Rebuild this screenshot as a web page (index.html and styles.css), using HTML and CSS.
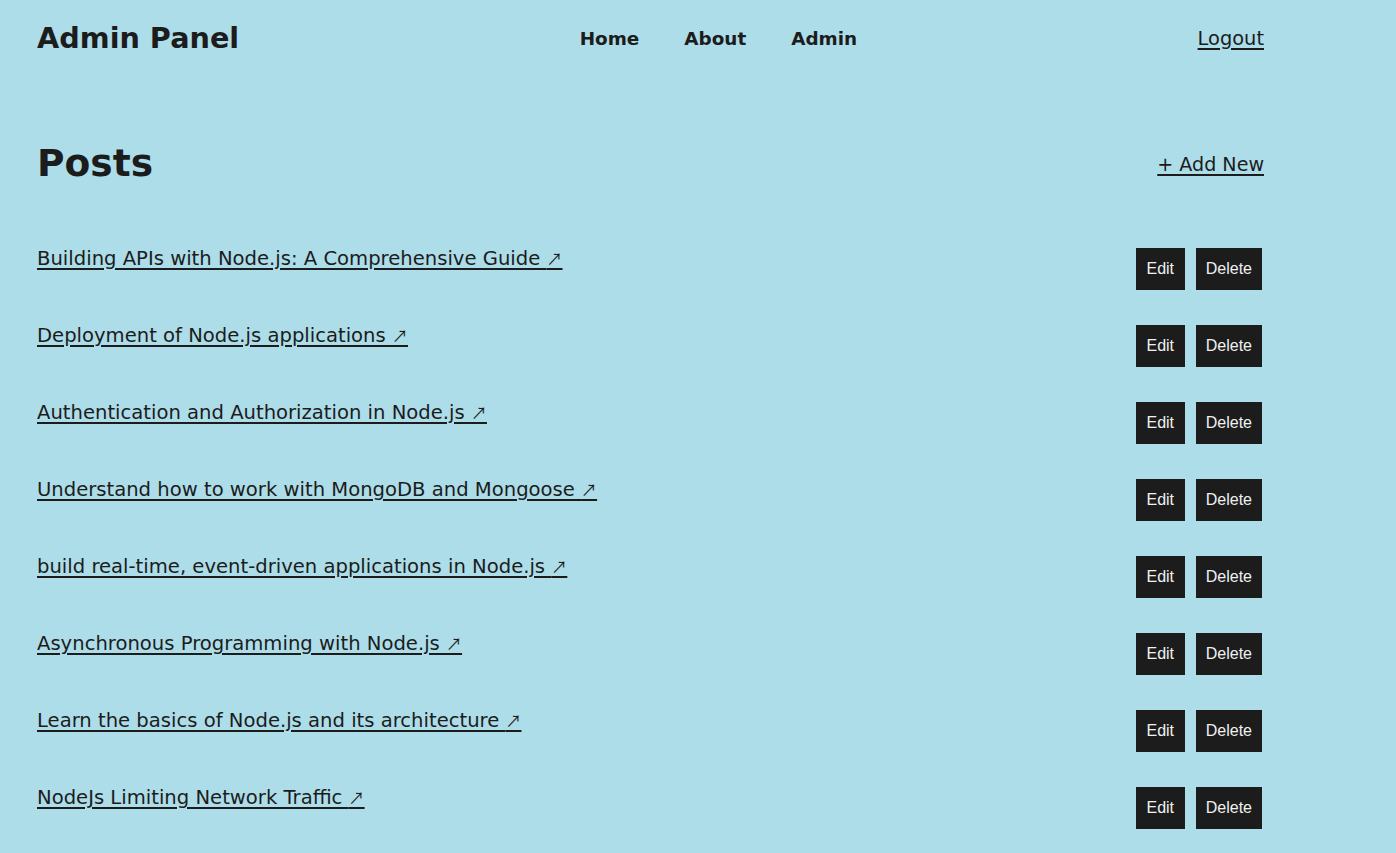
FILE: index.html
```html
<!DOCTYPE html>
<html lang="en">
<head>
<meta charset="utf-8">
<title>Admin Panel</title>
<link rel="stylesheet" href="styles.css">
</head>
<body>
<div class="page">
  <header class="topbar">
    <a class="brand" href="#">Admin Panel</a>
    <nav class="nav">
      <a href="#">Home</a>
      <a href="#">About</a>
      <a href="#">Admin</a>
    </nav>
    <a class="logout" href="#">Logout</a>
  </header>

  <main>
    <div class="title-row">
      <h1 class="title">Posts</h1>
      <a class="add-new" href="#">+ Add New</a>
    </div>

    <ul class="posts">
      <li class="post">
        <a class="post-link" href="#">Building APIs with Node.js: A Comprehensive Guide <span class="arrow">↗</span></a>
        <div class="actions"><button class="btn">Edit</button><button class="btn">Delete</button></div>
      </li>
      <li class="post">
        <a class="post-link" href="#">Deployment of Node.js applications <span class="arrow">↗</span></a>
        <div class="actions"><button class="btn">Edit</button><button class="btn">Delete</button></div>
      </li>
      <li class="post">
        <a class="post-link" href="#">Authentication and Authorization in Node.js <span class="arrow">↗</span></a>
        <div class="actions"><button class="btn">Edit</button><button class="btn">Delete</button></div>
      </li>
      <li class="post">
        <a class="post-link" href="#">Understand how to work with MongoDB and Mongoose <span class="arrow">↗</span></a>
        <div class="actions"><button class="btn">Edit</button><button class="btn">Delete</button></div>
      </li>
      <li class="post">
        <a class="post-link" href="#">build real-time, event-driven applications in Node.js <span class="arrow">↗</span></a>
        <div class="actions"><button class="btn">Edit</button><button class="btn">Delete</button></div>
      </li>
      <li class="post">
        <a class="post-link" href="#">Asynchronous Programming with Node.js <span class="arrow">↗</span></a>
        <div class="actions"><button class="btn">Edit</button><button class="btn">Delete</button></div>
      </li>
      <li class="post">
        <a class="post-link" href="#">Learn the basics of Node.js and its architecture <span class="arrow">↗</span></a>
        <div class="actions"><button class="btn">Edit</button><button class="btn">Delete</button></div>
      </li>
      <li class="post">
        <a class="post-link" href="#">NodeJs Limiting Network Traffic <span class="arrow">↗</span></a>
        <div class="actions"><button class="btn">Edit</button><button class="btn">Delete</button></div>
      </li>
    </ul>
  </main>
</div>
</body>
</html>
```
FILE: styles.css
```css
* { box-sizing: border-box; }

html, body {
  margin: 0;
  padding: 0;
  background: #addde9;
}

body {
  font-family: "DejaVu Sans", "Noto Sans", sans-serif;
  color: #1c1c1c;
}

a { color: #1c1c1c; }

.page {
  width: 1264px;
  padding-left: 37px;
}

.topbar {
  height: 76px;
  display: flex;
  justify-content: space-between;
  align-items: center;
}

.brand {
  font-size: 28.7px;
  font-weight: 700;
  text-decoration: none;
}

.nav {
  display: flex;
  gap: 45px;
}

.nav a {
  font-size: 18.4px;
  font-weight: 700;
  text-decoration: none;
}

.logout {
  font-size: 19.4px;
  text-decoration: underline;
  text-decoration-thickness: 1.6px;
  text-underline-offset: 3px;
}

.title-row {
  margin-top: 50px;
  height: 76px;
  display: flex;
  justify-content: space-between;
  align-items: center;
}

.title {
  margin: 0;
  font-size: 37.6px;
  font-weight: 700;
  line-height: 1;
}

.add-new {
  font-size: 19.1px;
  text-decoration: underline;
  text-decoration-thickness: 1.6px;
  text-underline-offset: 3px;
}

.posts {
  list-style: none;
  margin: 46px 0 0;
  padding: 0;
}

.post {
  display: flex;
  justify-content: space-between;
  align-items: flex-start;
  margin-bottom: 35px;
}

.post-link {
  font-size: 19.6px;
  line-height: 20px;
  text-decoration: underline;
  text-decoration-thickness: 1.6px;
  text-underline-offset: 3px;
}

.arrow {
  font-family: "Noto Sans CJK JP", "DejaVu Sans", sans-serif;
  font-size: 16px;
}

.actions {
  display: flex;
  gap: 11px;
  margin-right: 2px;
}

.btn {
  height: 42px;
  padding: 0 10px;
  min-width: 49px;
  border: 0;
  background: #1c1c1c;
  color: #f0f0f0;
  font-family: "Liberation Sans", Arial, sans-serif;
  font-size: 16px;
  cursor: pointer;
}
```
